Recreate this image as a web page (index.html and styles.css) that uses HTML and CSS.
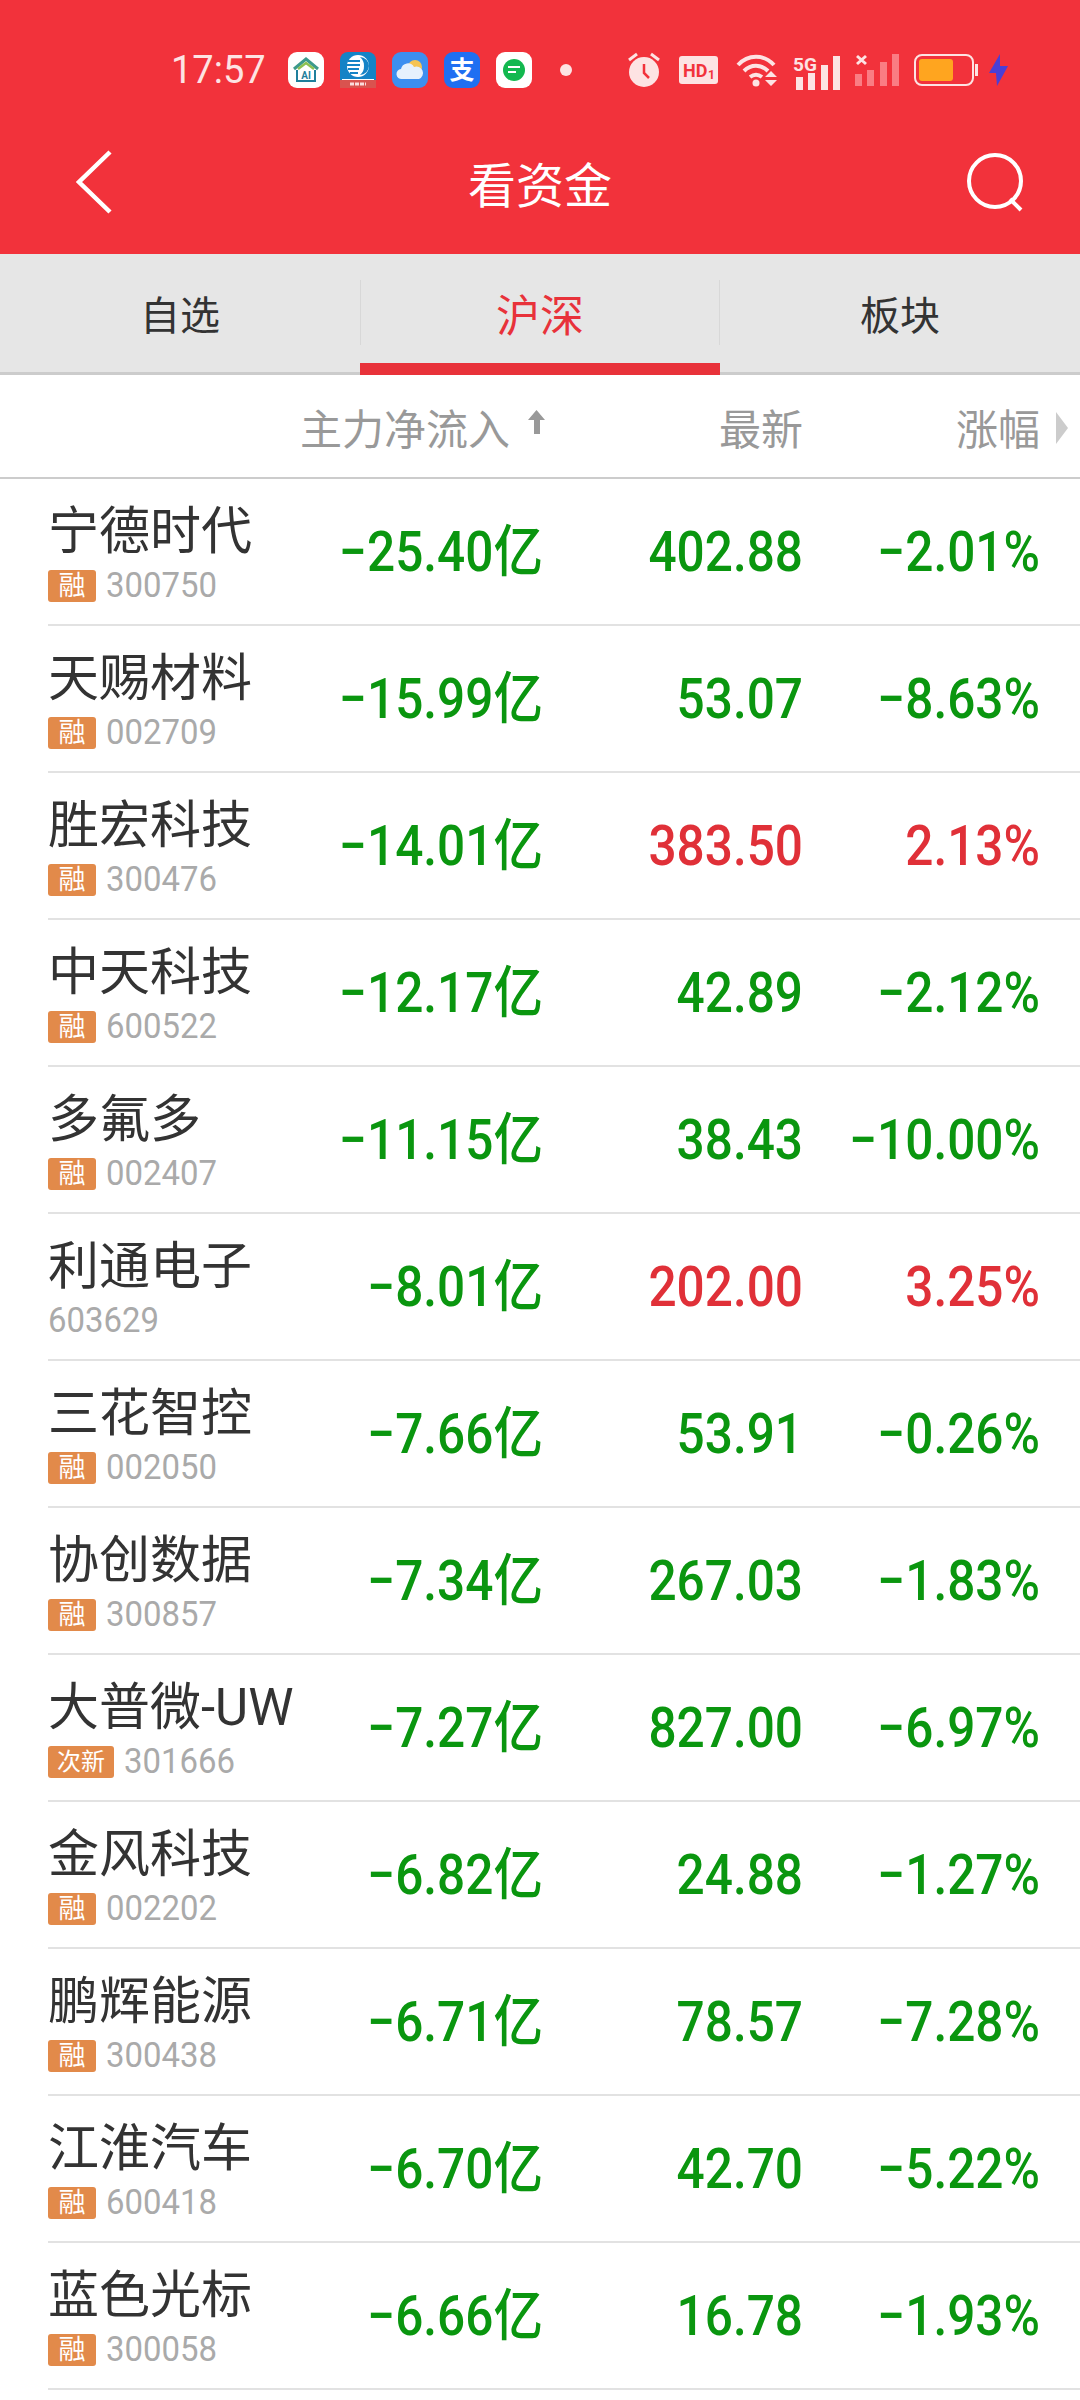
FILE: index.html
```html
<!DOCTYPE html>
<html lang="zh-CN">
<head>
    <meta charset="UTF-8">
    <meta name="viewport" content="width=device-width, initial-scale=1.0">
    <title>看资金</title>
    <link rel="stylesheet" href="styles.css">
</head>
<body>
    <div class="statusbar">
        <span class="time">17:57</span>
        <div class="apps">
            <svg class="app" viewBox="0 0 36 36"><rect width="36" height="36" rx="9" fill="#fff"/><path d="M6 17 18 7l12 10" fill="none" stroke="#3c9a8c" stroke-width="3"/><path d="M10 17 18 11l8 6" fill="none" stroke="#8cc152" stroke-width="2.500"/><path d="M9 18v11h18V18" fill="none" stroke="#1f7f9c" stroke-width="2"/><text x="18" y="27" class="app-ai">AI</text></svg>
            <svg class="app" viewBox="0 0 36 36"><rect width="36" height="36" rx="8" fill="#1583c6"/><circle cx="18" cy="14" r="11" fill="#fff"/><path d="M20 5a9 9 0 0 1 0 18c3-3 4-5 4-9s-1-6-4-9z" fill="#1583c6"/><path d="M8 9h12M7 13h13M8 17h11M10 21h8" stroke="#1583c6" stroke-width="1.800"/><rect y="28" width="36" height="8" fill="#d9534f"/><path d="M2 27.500h32" stroke="#fff"/><path d="M10 32h16" stroke="#fbdcdc" stroke-width="3" stroke-dasharray="4 1"/></svg>
            <svg class="app" viewBox="0 0 36 36"><rect width="36" height="36" rx="9" fill="#3d8ff0"/><circle cx="23" cy="15" r="7" fill="#f6c453"/><path d="M10 27a5 5 0 0 1-1-10 7 7 0 0 1 13-2 6 6 0 0 1 5 12z" fill="#e6f1fd"/></svg>
            <svg class="app" viewBox="0 0 36 36"><rect width="36" height="36" rx="9" fill="#1f6ff2"/><text x="18" y="27" class="app-pay">支</text></svg>
            <svg class="app" viewBox="0 0 36 36"><rect width="36" height="36" rx="9" fill="#fff"/><circle cx="18" cy="18" r="11" fill="#12b84f"/><path d="M12 15h12M12 20h8" stroke="#fff" stroke-width="2"/></svg>
        </div>
        <span class="dot"></span>
        <div class="sysicons">
            <svg width="32" height="36" viewBox="0 0 32 36"><circle cx="16" cy="20" r="15" fill="#fde3e3"/><path d="M16 12v9l5 5" fill="none" stroke="#f2323b" stroke-width="2.500"/><path d="M1 8l8-6M31 8l-8-6" stroke="#fde3e3" stroke-width="3"/></svg>
            <svg class="hd" width="39" height="28" viewBox="0 0 39 28"><rect width="39" height="28" rx="3" fill="#fde3e3"/><text x="4" y="21" class="hd-text">HD</text><text x="29" y="23" class="hd-sub">1</text></svg>
            <svg class="wifi" width="42" height="34" viewBox="0 0 42 34"><path d="M2 12c10-11 26-11 36 0M8 18c7-7 17-7 24 0M14 24c4-3 8-3 12 0" fill="none" stroke="#fde3e3" stroke-width="4"/><circle cx="20" cy="30" r="3.500" fill="#fde3e3"/><path d="M29 24h12l-6-6zM29 27h12l-6 6z" fill="#fde3e3"/></svg>
            <svg class="signal" width="47" height="44" viewBox="0 -8 47 44"><text x="0" y="15" class="sig-text">5G</text><rect x="3" y="21" width="7" height="13" fill="#fde3e3"/><rect x="15" y="17" width="7" height="17" fill="#fde3e3"/><rect x="28" y="9" width="7" height="25" fill="#fde3e3"/><rect x="40" y="0" width="7" height="34" fill="#fde3e3"/></svg>
            <svg class="signal2" width="44" height="32" viewBox="0 0 44 32"><path d="M2 2l9 8M11 2l-9 8" stroke="#fde3e3" stroke-width="3"/><rect x="0" y="20" width="7" height="12" fill="#fa7d83"/><rect x="12" y="16" width="7" height="16" fill="#fa7d83"/><rect x="25" y="8" width="7" height="24" fill="#fa7d83"/><rect x="37" y="0" width="7" height="32" fill="#fa7d83"/></svg>
            <svg class="battery" width="64" height="32" viewBox="0 0 64 32"><rect x="1" y="1" width="58" height="30" rx="7" fill="none" stroke="#fde3e3" stroke-width="2"/><rect x="5" y="5" width="34" height="22" rx="3" fill="#ffa51f"/><rect x="61" y="10" width="3" height="12" fill="#fde3e3"/></svg>
            <svg class="bolt" width="19" height="32" viewBox="0 0 19 32"><path d="M11 0 0 19h7l1 13 11-20h-8z" fill="#4a3fd6"/></svg>
        </div>
    </div>

    <div class="navbar">
        <svg class="back" width="36" height="64" viewBox="0 0 36 64"><path d="M34 2 3 32l31 30" fill="none" stroke="#fff" stroke-width="4.500"/></svg>
        <h1 class="title">看资金</h1>
        <svg class="search" width="60" height="60" viewBox="0 0 60 60"><circle cx="29" cy="29" r="26" fill="none" stroke="#fff" stroke-width="4"/><path d="M44 47l11 11" stroke="#fff" stroke-width="4"/></svg>
    </div>

    <div class="tabs">
        <div class="tab">自选</div>
        <div class="tab tab-active">沪深</div>
        <div class="tab">板块</div>
    </div>

    <div class="grid head">
        <div></div>
        <div class="head-flow">主力净流入<svg class="sort" width="17" height="24" viewBox="0 0 17 24"><path d="M8.500 0 17 10h-5v14H6V10H0z" fill="#999"/></svg></div>
        <div>最新</div>
        <div class="head-pct">涨幅</div>
    </div>

    <div class="grid row">
        <div><div class="name">宁德时代</div><div class="sub"><span class="tag">融</span><span class="code">300750</span></div></div>
        <div class="num down">−25.40<span class="unit">亿</span></div>
        <div class="num down">402.88</div>
        <div class="num down">−2.01%</div>
    </div>
    <div class="grid row">
        <div><div class="name">天赐材料</div><div class="sub"><span class="tag">融</span><span class="code">002709</span></div></div>
        <div class="num down">−15.99<span class="unit">亿</span></div>
        <div class="num down">53.07</div>
        <div class="num down">−8.63%</div>
    </div>
    <div class="grid row">
        <div><div class="name">胜宏科技</div><div class="sub"><span class="tag">融</span><span class="code">300476</span></div></div>
        <div class="num down">−14.01<span class="unit">亿</span></div>
        <div class="num up">383.50</div>
        <div class="num up">2.13%</div>
    </div>
    <div class="grid row">
        <div><div class="name">中天科技</div><div class="sub"><span class="tag">融</span><span class="code">600522</span></div></div>
        <div class="num down">−12.17<span class="unit">亿</span></div>
        <div class="num down">42.89</div>
        <div class="num down">−2.12%</div>
    </div>
    <div class="grid row">
        <div><div class="name">多氟多</div><div class="sub"><span class="tag">融</span><span class="code">002407</span></div></div>
        <div class="num down">−11.15<span class="unit">亿</span></div>
        <div class="num down">38.43</div>
        <div class="num down">−10.00%</div>
    </div>
    <div class="grid row">
        <div><div class="name">利通电子</div><div class="sub"><span class="code">603629</span></div></div>
        <div class="num down">−8.01<span class="unit">亿</span></div>
        <div class="num up">202.00</div>
        <div class="num up">3.25%</div>
    </div>
    <div class="grid row">
        <div><div class="name">三花智控</div><div class="sub"><span class="tag">融</span><span class="code">002050</span></div></div>
        <div class="num down">−7.66<span class="unit">亿</span></div>
        <div class="num down">53.91</div>
        <div class="num down">−0.26%</div>
    </div>
    <div class="grid row">
        <div><div class="name">协创数据</div><div class="sub"><span class="tag">融</span><span class="code">300857</span></div></div>
        <div class="num down">−7.34<span class="unit">亿</span></div>
        <div class="num down">267.03</div>
        <div class="num down">−1.83%</div>
    </div>
    <div class="grid row">
        <div><div class="name">大普微-UW</div><div class="sub"><span class="tag tag-wide">次新</span><span class="code">301666</span></div></div>
        <div class="num down">−7.27<span class="unit">亿</span></div>
        <div class="num down">827.00</div>
        <div class="num down">−6.97%</div>
    </div>
    <div class="grid row">
        <div><div class="name">金风科技</div><div class="sub"><span class="tag">融</span><span class="code">002202</span></div></div>
        <div class="num down">−6.82<span class="unit">亿</span></div>
        <div class="num down">24.88</div>
        <div class="num down">−1.27%</div>
    </div>
    <div class="grid row">
        <div><div class="name">鹏辉能源</div><div class="sub"><span class="tag">融</span><span class="code">300438</span></div></div>
        <div class="num down">−6.71<span class="unit">亿</span></div>
        <div class="num down">78.57</div>
        <div class="num down">−7.28%</div>
    </div>
    <div class="grid row">
        <div><div class="name">江淮汽车</div><div class="sub"><span class="tag">融</span><span class="code">600418</span></div></div>
        <div class="num down">−6.70<span class="unit">亿</span></div>
        <div class="num down">42.70</div>
        <div class="num down">−5.22%</div>
    </div>
    <div class="grid row">
        <div><div class="name">蓝色光标</div><div class="sub"><span class="tag">融</span><span class="code">300058</span></div></div>
        <div class="num down">−6.66<span class="unit">亿</span></div>
        <div class="num down">16.78</div>
        <div class="num down">−1.93%</div>
    </div>
</body>
</html>
```

FILE: styles.css
```css
body {
    font-family: Roboto, "Noto Sans CJK SC", sans-serif;
    background-color: #fff;
    margin: 0;
    padding: 0;
    height: 2400px;
    overflow: hidden;
}

.statusbar {
    background-color: #f2323b;
    height: 140px;
    padding-left: 171px;
    display: flex;
    align-items: center;
    color: #fde3e3;
}

.time {
    font-size: 38px;
    width: 117px;
}

.apps {
    display: flex;
    gap: 16px;
}

.app {
    width: 36px;
    height: 36px;
    display: block;
}

.app-ai {
    font-family: Roboto, sans-serif;
    font-size: 10px;
    font-weight: 700;
    fill: #1f7f9c;
    text-anchor: middle;
}

.app-pay {
    font-family: "Noto Sans CJK SC", sans-serif;
    font-size: 25px;
    font-weight: 700;
    fill: #fff;
    text-anchor: middle;
}

.dot {
    width: 12px;
    height: 12px;
    border-radius: 50%;
    background-color: #fde3e3;
    margin-left: 28px;
}

.sysicons {
    display: flex;
    align-items: center;
    margin-left: 56px;
}

.hd { margin-left: 19px; }
.wifi { margin-left: 18px; }
.signal { margin-left: 15px; }
.signal2 { margin-left: 15px; }
.battery { margin-left: 15px; }
.bolt { margin-left: 11px; }

.hd-text {
    font-family: Roboto, sans-serif;
    font-size: 18px;
    font-weight: 700;
    fill: #f2323b;
}

.hd-sub {
    font-family: Roboto, sans-serif;
    font-size: 12px;
    font-weight: 700;
    fill: #f2323b;
}

.sig-text {
    font-family: Roboto, sans-serif;
    font-size: 19px;
    font-weight: 700;
    fill: #fde3e3;
}

.navbar {
    background-color: #f2323b;
    height: 83px;
    padding: 0 54px 31px 54px;
    display: grid;
    grid-template-columns: 1fr auto 1fr;
    align-items: center;
}

.back {
    margin-left: 22px;
}

.search {
    justify-self: end;
}

.title {
    margin: 0;
    font-size: 48px;
    font-weight: 400;
    color: #fff;
}

.tabs {
    background-color: #e6e6e6;
    height: 121px;
    box-sizing: border-box;
    border-bottom: 3px solid #ccc;
    display: flex;
}

.tab {
    flex: 1;
    height: 118px;
    display: flex;
    align-items: center;
    justify-content: center;
    font-size: 40px;
    color: #333;
    position: relative;
}

.tab-active {
    font-size: 44px;
    color: #e8323a;
}

.tab-active::before {
    content: "";
    position: absolute;
    top: 26px;
    bottom: 27px;
    left: 0;
    right: 0;
    border-left: 1px solid #d8d8d8;
    border-right: 1px solid #d8d8d8;
}

.tab-active::after {
    content: "";
    position: absolute;
    left: 0;
    right: 0;
    bottom: -3px;
    height: 12px;
    background-color: #e8323a;
}

.grid {
    display: grid;
    grid-template-columns: 1fr 248px 260px 237px;
    align-items: center;
    text-align: right;
    padding-right: 40px;
}

.head {
    height: 104px;
    box-sizing: border-box;
    padding-left: 48px;
    border-bottom: 2px solid #ccc;
    font-size: 42px;
    color: #999;
}

.head-flow {
    display: flex;
    align-items: center;
    justify-content: flex-end;
    gap: 18px;
    margin-right: -2px;
}

.sort {
    margin-bottom: 8px;
}

.head-pct {
    position: relative;
}

.head-pct::after {
    content: "";
    position: absolute;
    right: -28px;
    top: 16px;
    border-left: 12px solid #ccc;
    border-top: 16px solid transparent;
    border-bottom: 16px solid transparent;
}

.row {
    height: 147px;
    box-sizing: border-box;
    margin-left: 48px;
    border-bottom: 2px solid #e2e2e2;
}

.name {
    font-size: 51px;
    line-height: 60px;
    color: #333;
    text-align: left;
    white-space: nowrap;
}

.sub {
    display: flex;
    align-items: center;
    height: 32px;
    margin-top: 8px;
    gap: 10px;
}

.tag {
    width: 48px;
    height: 32px;
    background-color: #e28a4a;
    border-radius: 3px;
    color: #fff;
    font-size: 27px;
    line-height: 32px;
    text-align: center;
}

.tag-wide {
    width: 66px;
    font-size: 24px;
}

.code {
    font-size: 35px;
    color: #aaa;
    transform: scaleX(0.94);
    transform-origin: left center;
}

.num {
    font-size: 56px;
    font-weight: 500;
    line-height: 60px;
    white-space: nowrap;
    transform: scaleX(0.885);
    transform-origin: right center;
}

.down {
    color: #0a960f;
}

.up {
    color: #e03038;
}
```
